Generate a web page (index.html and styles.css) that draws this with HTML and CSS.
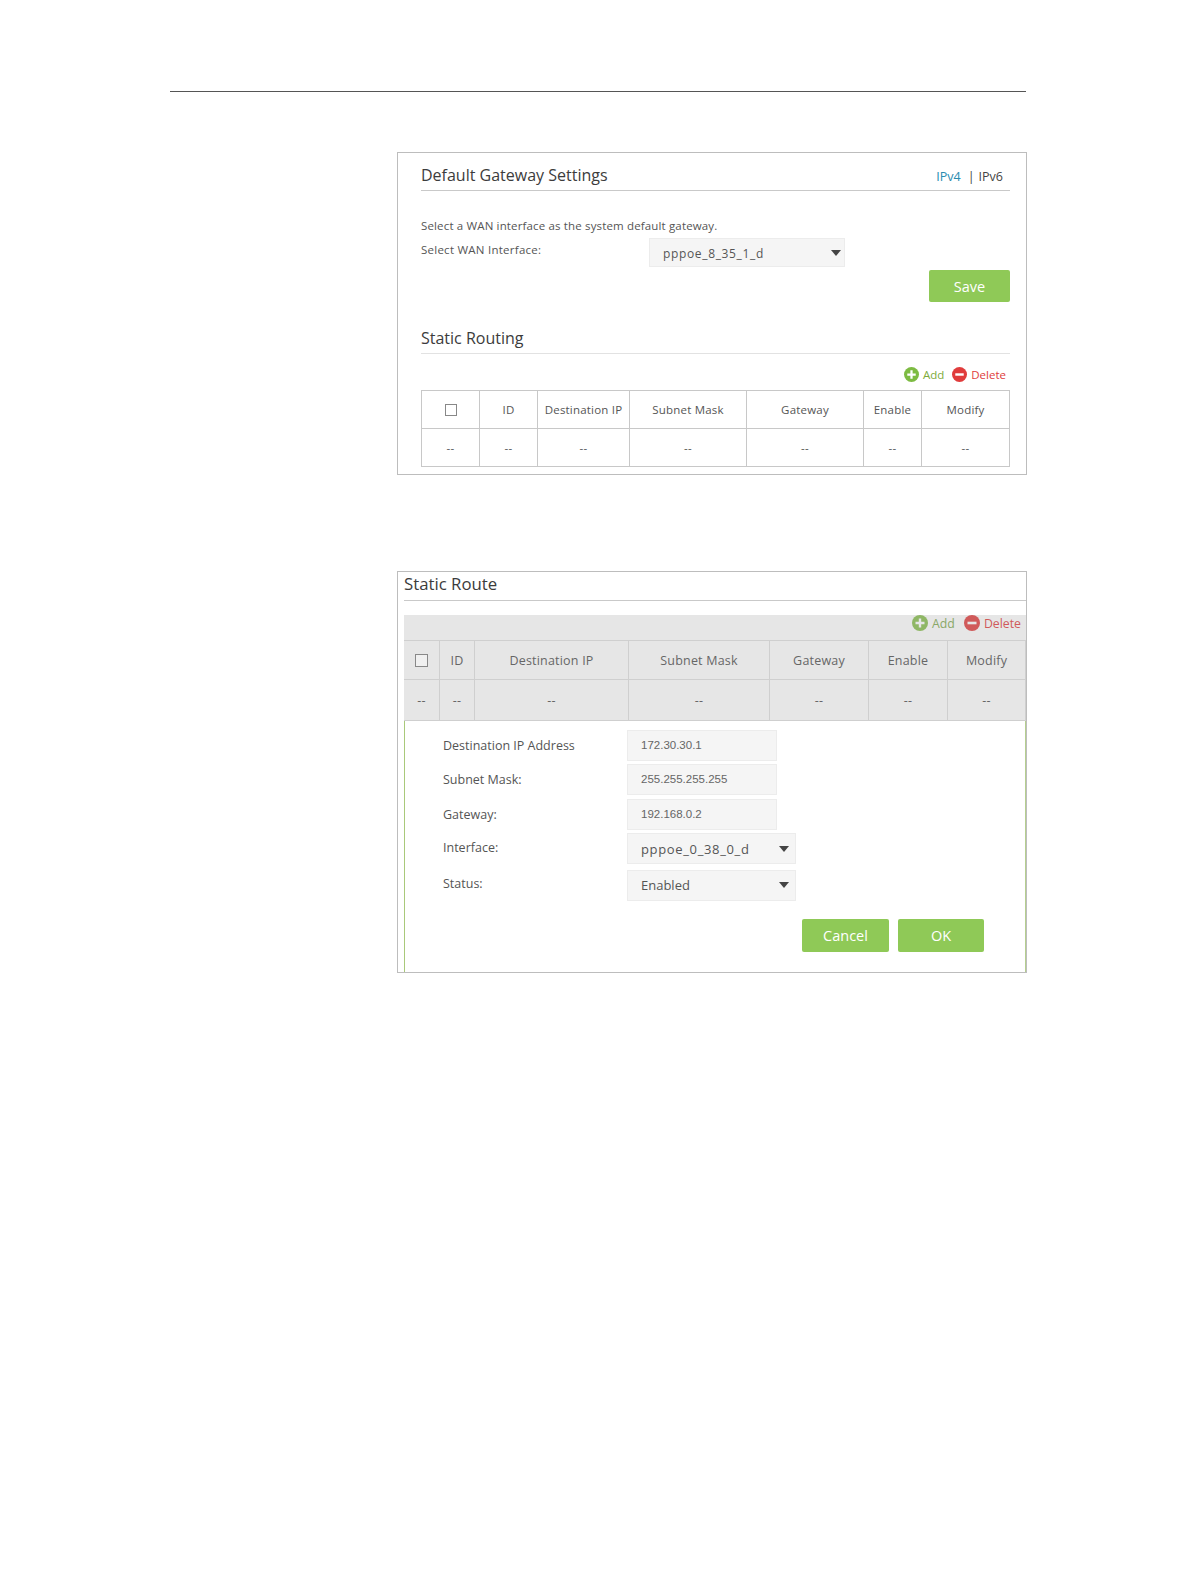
FILE: index.html
```html
<!DOCTYPE html>
<html lang="en">
<head>
<meta charset="utf-8">
<title>Static Routing</title>
<link rel="stylesheet" href="styles.css">
</head>
<body>
<div class="page">
  <div class="rule"></div>

  <section class="panel gateway">
    <div class="head">
      <h2>Default Gateway Settings</h2>
      <div class="proto"><span class="on">IPv4</span><span class="bar">|</span><span>IPv6</span></div>
    </div>
    <p class="hint">Select a WAN interface as the system default gateway.</p>
    <div class="wan">
      <span class="wan-label">Select WAN Interface:</span>
      <div class="select wan-select"><span class="wide">pppoe_8_35_1_d</span><i class="caret"></i></div>
    </div>
    <div class="save-row"><button class="btn save">Save</button></div>
    <div class="head routing"><h2>Static Routing</h2></div>
    <div class="actions">
      <span class="act add"><svg viewBox="0 0 16 16"><circle cx="8" cy="8" r="8" fill="#7dbb42"/><path d="M8 3.5v9M3.5 8h9" stroke="#fff" stroke-width="2.4"/></svg>Add</span>
      <span class="act del"><svg viewBox="0 0 16 16"><circle cx="8" cy="8" r="8" fill="#e03c3c"/><path d="M3.5 8h9" stroke="#fff" stroke-width="2.6"/></svg>Delete</span>
    </div>
    <div class="grid grid-a">
      <div class="cell th"><i class="check"></i></div><div class="cell th">ID</div><div class="cell th">Destination IP</div><div class="cell th">Subnet Mask</div><div class="cell th">Gateway</div><div class="cell th">Enable</div><div class="cell th">Modify</div>
      <div class="cell">--</div><div class="cell">--</div><div class="cell">--</div><div class="cell">--</div><div class="cell">--</div><div class="cell">--</div><div class="cell">--</div>
    </div>
  </section>

  <section class="panel route">
    <h2 class="route-title">Static Route</h2>
    <div class="dim">
      <div class="actions dim-actions">
        <span class="act add"><svg viewBox="0 0 16 16"><circle cx="8" cy="8" r="8" fill="#8fb765"/><path d="M8 3.5v9M3.5 8h9" stroke="#e6e6e6" stroke-width="2.4"/></svg>Add</span>
        <span class="act del"><svg viewBox="0 0 16 16"><circle cx="8" cy="8" r="8" fill="#d05a5a"/><path d="M3.5 8h9" stroke="#e6e6e6" stroke-width="2.6"/></svg>Delete</span>
      </div>
      <div class="grid grid-b">
        <div class="cell th"><i class="check"></i></div><div class="cell th">ID</div><div class="cell th">Destination IP</div><div class="cell th">Subnet Mask</div><div class="cell th">Gateway</div><div class="cell th">Enable</div><div class="cell th">Modify</div>
        <div class="cell">--</div><div class="cell">--</div><div class="cell">--</div><div class="cell">--</div><div class="cell">--</div><div class="cell">--</div><div class="cell">--</div>
      </div>
    </div>
    <div class="form">
      <div class="row r1"><label>Destination IP Address</label><div class="input">172.30.30.1</div></div>
      <div class="row r2"><label>Subnet Mask:</label><div class="input">255.255.255.255</div></div>
      <div class="row r3"><label>Gateway:</label><div class="input">192.168.0.2</div></div>
      <div class="row r4"><label>Interface:</label><div class="select form-select"><span class="wide">pppoe_0_38_0_d</span><i class="caret"></i></div></div>
      <div class="row r5"><label>Status:</label><div class="select form-select"><span>Enabled</span><i class="caret"></i></div></div>
      <div class="buttons"><button class="btn cancel">Cancel</button><button class="btn ok">OK</button></div>
    </div>
  </section>
</div>
</body>
</html>
```
FILE: styles.css
```css
* { box-sizing: border-box; }
html, body { margin: 0; padding: 0; background: #fff; }
body { width: 1196px; height: 1582px; overflow: hidden; font-family: "Open Sans", "Noto Sans", sans-serif; color: #555; }
.page { padding: 91px 170px 0 170px; }
.rule { height: 1px; background: #555; width: 856px; }

.panel { margin-left: 227px; width: 630px; border: 1px solid #bdbdbd; background: #fff; }
.gateway { margin-top: 60px; height: 323px; padding: 0 16px 0 23px; }
.route { margin-top: 96px; height: 402px; padding: 0 0 0 6px; }

h2 { margin: 0; font-weight: 400; font-size: 16px; color: #3c3c3c; line-height: 20px; }
.head { display: flex; justify-content: space-between; align-items: flex-end; height: 38px; padding-bottom: 5px; border-bottom: 1px solid #c9c9c9; }
.proto { display: flex; gap: 7px; font-size: 12.5px; color: #444; line-height: 16px; padding-right: 7px; }
.proto .on { color: #2a8cb0; }
.proto .bar { margin-right: -3px; }
.hint { margin: 27px 0 0; font-size: 11.5px; letter-spacing: .15px; line-height: 16px; color: #555; }
.wan { display: flex; align-items: flex-start; margin-top: 4px; }
.wan-label { width: 228px; font-size: 11.5px; letter-spacing: .25px; line-height: 16px; margin-top: 4px; }
.select { display: flex; justify-content: space-between; align-items: center; background: #f5f5f5; border: 1px solid #ececec; color: #555; }
.wan-select { width: 196px; height: 29px; padding: 1px 3px 0 13px; font-size: 12px; }
.wide { letter-spacing: .65px; }
.caret { width: 0; height: 0; border-left: 5px solid transparent; border-right: 5px solid transparent; border-top: 6px solid #444; }
.save-row { display: flex; justify-content: flex-end; margin-top: 3px; }
.btn { border: 0; border-radius: 2px; background: #8fc957; color: #fff; font-family: inherit; padding: 0; }
.save { width: 81px; height: 32px; font-size: 14.5px; }
.routing { margin-top: 20px; height: 32px; border-bottom-color: #e2e2e2; }
.actions { display: flex; justify-content: flex-end; align-items: flex-start; gap: 8px; font-size: 11.5px; }
.gateway .actions { height: 36px; padding: 13px 4px 0 0; }
.act { display: flex; align-items: center; gap: 4px; line-height: 15px; }
.act svg { width: 15px; height: 15px; }
.add { color: #7dab3a; }
.del { color: #e03c3c; }

.grid { display: grid; font-size: 11.5px; letter-spacing: .2px; }
.cell { display: flex; align-items: center; justify-content: center; border-right: 1px solid #c8c8c8; border-bottom: 1px solid #c8c8c8; color: #555; }
.check { display: block; width: 12px; height: 12px; border: 1px solid #888; background: #fff; }
.grid-a { grid-template-columns: 58px 58px 92px 117px 117px 58px 88px; grid-template-rows: 38px 38px; width: 589px; border-left: 1px solid #c8c8c8; border-top: 1px solid #c8c8c8; }

.route-title { font-size: 16.8px; line-height: 24px; height: 29px; border-bottom: 1px solid #c9c9c9; }
.dim { margin-top: 14px; background: #e6e6e6; }
.dim-actions { height: 25px; padding-right: 5px; font-size: 12.3px; gap: 9px; }
.dim-actions .act svg { width: 16px; height: 16px; }
.dim-actions .add { color: #8aa868; }
.dim-actions .del { color: #d05a5a; }
.grid-b { grid-template-columns: 36px 35px 154px 141px 99px 79px 78px; grid-template-rows: 40px 41px; font-size: 12.5px; }
.grid-b .cell { color: #666; border-color: #cfcfcf; }
.grid-b .th { border-top: 1px solid #cfcfcf; }
.grid-b .check { width: 13px; height: 13px; background: #f0f0f0; }

.form { height: 251px; border-left: 1px solid #a9c97a; border-right: 1px solid #b5cf8f; padding: 9px 0 0 37px; font-size: 12.5px; }
.row { display: flex; align-items: center; color: #555; }
.row label { width: 185px; padding-left: 1px; }
.r4 label { padding-bottom: 2px; }
.r5 label { padding-bottom: 4px; }
.input { width: 150px; height: 31px; padding: 0 0 2px 13px; display: flex; align-items: center; background: #f5f5f5; border: 1px solid #ececec; font-family: "Liberation Sans", sans-serif; font-size: 11.5px; color: #666; }
.form-select { width: 169px; height: 31px; padding: 0 6px 0 13px; font-size: 13px; }
.r5 .form-select { padding-bottom: 2px; }
.r2 { margin-top: 3px; }
.r3 { margin-top: 4px; }
.r4 { margin-top: 3px; }
.r5 { margin-top: 6px; }
.buttons { display: flex; justify-content: flex-end; gap: 9px; margin-top: 18px; padding-right: 41px; }
.cancel, .ok { height: 33px; font-size: 14.5px; }
.cancel { width: 87px; }
.ok { width: 86px; }
```
